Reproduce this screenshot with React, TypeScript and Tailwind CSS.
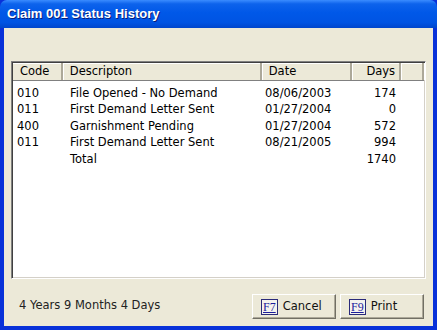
import React from 'react';

const rows = [
  { code: '010', desc: 'File Opened - No Demand', date: '08/06/2003', days: '174' },
  { code: '011', desc: 'First Demand Letter Sent', date: '01/27/2004', days: '0' },
  { code: '400', desc: 'Garnishment Pending', date: '01/27/2004', days: '572' },
  { code: '011', desc: 'First Demand Letter Sent', date: '08/21/2005', days: '994' },
  { code: '', desc: 'Total', date: '', days: '1740' },
];

function HeaderCell({ children, w, right }: { children?: React.ReactNode; w: string; right?: boolean }) {
  return (
    <div
      className={`${w} h-full flex items-center border-r border-[#aca899] shadow-[inset_-1px_0_0_#aca899,1px_0_0_#fff] ${
        right ? 'justify-end pr-[5px]' : 'pl-[7px]'
      }`}
    >
      {children}
    </div>
  );
}

function FKeyButton({ fkey, label }: { fkey: string; label: string }) {
  return (
    <button className="w-[84px] h-[25px] flex items-center bg-[#ece9d8] border border-t-white border-l-white border-r-[#716f64] border-b-[#716f64] shadow-[inset_-1px_-1px_0_#aca899] pl-[8px] gap-[5px] text-[#111]">
      <span className="h-[16px] px-[1px] flex items-center border border-[#2a2a7a] bg-[#f4f3ee] text-[#1c1c9c] underline text-[12px] leading-none font-['Liberation_Serif',serif]">
        {fkey}
      </span>
      <span>{label}</span>
    </button>
  );
}

export default function App() {
  return (
    <div className="w-[437px] h-[330px] flex flex-col bg-[#0831d9] font-['DejaVu_Sans',sans-serif] text-[11.5px] text-black select-none overflow-hidden">
      {/* title bar */}
      <div className="h-[28px] shrink-0 flex items-center pl-[7px] rounded-t-[7px] bg-[linear-gradient(to_bottom,#3a8cff_0%,#0d63ec_14%,#0058e8_45%,#0054e3_80%,#0046cc_100%)]">
        <span className="text-white font-bold text-[13px] font-['Liberation_Sans',sans-serif] [text-shadow:1px_1px_0_#0a1e7a]">
          Claim 001 Status History
        </span>
      </div>

      {/* body */}
      <div className="flex-1 mx-[4px] mb-[4px] bg-[#ece9d8] flex flex-col pt-[33px] px-[7px]">
        {/* list */}
        <div className="h-[218px] shrink-0 bg-white border border-t-[#808080] border-l-[#808080] border-r-white border-b-white shadow-[inset_1px_1px_0_#404040,inset_-1px_-1px_0_#d4d0c8] p-[1px] flex flex-col">
          <div className="h-[18px] flex bg-[#ece9d8] border-b border-[#808080] shadow-[inset_0_1px_0_#fff]">
            <HeaderCell w="w-[50px]">Code</HeaderCell>
            <HeaderCell w="w-[200px]">Descripton</HeaderCell>
            <HeaderCell w="w-[91px]">Date</HeaderCell>
            <HeaderCell w="w-[49px]" right>Days</HeaderCell>
            <HeaderCell w="w-[23px]" />
          </div>
          <div className="pt-[4px]">
            {rows.map((r, i) => (
              <div key={i} className="h-[16.6px] flex items-center">
                <div className="w-[50px] pl-[4px]">{r.code}</div>
                <div className="w-[200px] pl-[7px]">{r.desc}</div>
                <div className="w-[91px] pl-[2px]">{r.date}</div>
                <div className="w-[42px] text-right">{r.days}</div>
              </div>
            ))}
          </div>
        </div>

        {/* footer */}
        <div className="flex-1 flex items-start justify-between pl-[8px] pr-[2px] pt-[15px]">
          <span className="text-[#222] mt-[3px]">4 Years 9 Months 4 Days</span>
          <div className="flex gap-[4px]">
            <FKeyButton fkey="F7" label="Cancel" />
            <FKeyButton fkey="F9" label="Print" />
          </div>
        </div>
      </div>
    </div>
  );
}
